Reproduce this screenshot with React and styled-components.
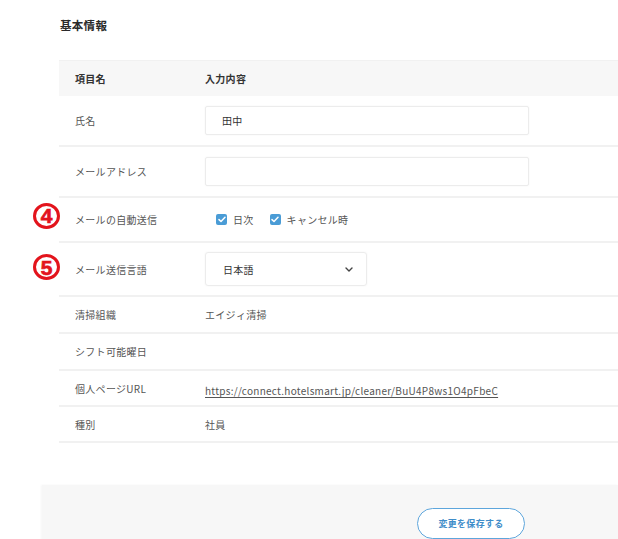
import React from "react";
import styled, { createGlobalStyle } from "styled-components";

const Global = createGlobalStyle`
  html, body { margin: 0; padding: 0; background: #fff; overflow: hidden; }
  body { font-family: "Noto Sans CJK JP", "Noto Sans", sans-serif; color: #444; }
  * { box-sizing: border-box; }
`;

const Page = styled.div`
  width: 618px;
  height: 539px;
  overflow: hidden;
`;

const Section = styled.section`
  padding: 17px 0 0 59px;
`;

const Title = styled.h2`
  margin: 0 0 0 1px;
  font-size: 11.5px;
  line-height: 17px;
  font-weight: 700;
  color: #2a2a2a;
  letter-spacing: 0.3px;
`;

const Table = styled.div`
  margin-top: 26px;
  display: flex;
  flex-direction: column;
`;

const Row = styled.div`
  position: relative;
  display: grid;
  grid-template-columns: 130px 1fr;
  align-items: center;
  height: ${(p) => p.$h}px;
  padding-left: 16px;
  background: ${(p) => (p.$head ? "#f7f7f7" : "#fff")};
  border-top: ${(p) => (p.$head ? "1px solid #f1f1f1" : "none")};
  border-bottom: ${(p) => (p.$head ? "none" : "2px solid #f1f1f1")};
`;

const HeadCell = styled.div`
  font-size: 10px;
  font-weight: 700;
  color: #333;
  letter-spacing: 0.3px;
`;

const Label = styled.div`
  font-size: 10px;
  color: #555;
  letter-spacing: 0.3px;
`;

const Value = styled.div`
  font-size: 10px;
  color: #555;
  letter-spacing: 0.3px;
`;

const Link = styled.a`
  font-size: 10px;
  color: #555;
  letter-spacing: 0.28px;
  text-decoration: underline;
  text-underline-offset: 2px;
`;

const TextInput = styled.div`
  width: 324px;
  height: 29px;
  border: 1px solid #ececec;
  border-radius: 2px;
  box-shadow: 0 0 2px rgba(0, 0, 0, 0.05);
  padding-left: 16px;
  display: flex;
  align-items: center;
  font-size: 10px;
  color: #333;
  letter-spacing: 0.3px;
`;

const Select = styled.div`
  width: 162px;
  height: 34px;
  border: 1px solid #ececec;
  border-radius: 3px;
  box-shadow: 0 0 2px rgba(0, 0, 0, 0.05);
  padding: 0 13px 0 17px;
  display: flex;
  align-items: center;
  justify-content: space-between;
  font-size: 10px;
  color: #333;
  letter-spacing: 0.3px;
`;

const Checks = styled.div`
  display: flex;
  align-items: center;
  gap: 16px;
  padding-left: 11px;
`;

const CheckItem = styled.label`
  display: flex;
  align-items: center;
  gap: 6px;
  font-size: 10px;
  color: #555;
  letter-spacing: 0.3px;
`;

const Box = styled.span`
  width: 11px;
  height: 11px;
  border-radius: 2px;
  background: #4a9cd6;
  display: inline-flex;
  align-items: center;
  justify-content: center;
`;

const Marker = styled.span`
  position: absolute;
  left: -26px;
  top: 50%;
  transform: translateY(calc(-50% + ${(p) => p.$dy || 0}px));
  width: 27px;
  height: 26px;
  border: 3px solid #e3141c;
  border-radius: 50%;
  display: flex;
  align-items: center;
  justify-content: center;
  font-family: "Liberation Sans", Arial, sans-serif;
  font-weight: 700;
  font-size: 21px;
  line-height: 1;
  color: #e3141c;
  -webkit-text-stroke: 0.7px #e3141c;
`;

const Footer = styled.footer`
  margin: 42px 0 0 42px;
  height: 80px;
  background: #f7f7f7;
  box-shadow: -1px 0 2px rgba(0, 0, 0, 0.04);
  padding: 23px 0 0 375px;
`;

const SaveButton = styled.button`
  width: 108px;
  height: 31px;
  border: 1px solid #5ea6dc;
  border-radius: 16px;
  background: #fff;
  color: #3f8dc9;
  font-family: "Noto Sans CJK JP", sans-serif;
  font-size: 9px;
  font-weight: 700;
  letter-spacing: 0.3px;
  padding: 0;
`;

const Check = () => (
  <Box>
    <svg width="8" height="7" viewBox="0 0 8 7">
      <polyline points="1,3.6 3,5.5 7,1.2" fill="none" stroke="#fff" strokeWidth="1.5" strokeLinecap="round" strokeLinejoin="round" />
    </svg>
  </Box>
);

const Chevron = () => (
  <svg width="8" height="5" viewBox="0 0 8 5">
    <polyline points="1,1 4,4 7,1" fill="none" stroke="#444" strokeWidth="1.4" strokeLinecap="round" strokeLinejoin="round" />
  </svg>
);

export default function App() {
  return (
    <Page>
      <Global />
      <Section>
        <Title>基本情報</Title>
        <Table>
          <Row $head $h={36}>
            <HeadCell>項目名</HeadCell>
            <HeadCell>入力内容</HeadCell>
          </Row>
          <Row $h={51}>
            <Label>氏名</Label>
            <TextInput>田中</TextInput>
          </Row>
          <Row $h={51}>
            <Label>メールアドレス</Label>
            <TextInput />
          </Row>
          <Row $h={45}>
            <Marker $dy={-4}>4</Marker>
            <Label>メールの自動送信</Label>
            <Checks>
              <CheckItem><Check />日次</CheckItem>
              <CheckItem><Check />キャンセル時</CheckItem>
            </Checks>
          </Row>
          <Row $h={54}>
            <Marker $dy={-2}>5</Marker>
            <Label>メール送信言語</Label>
            <Select>
              <span>日本語</span>
              <Chevron />
            </Select>
          </Row>
          <Row $h={37}>
            <Label>清掃組織</Label>
            <Value>エイジィ清掃</Value>
          </Row>
          <Row $h={37}>
            <Label>シフト可能曜日</Label>
            <Value />
          </Row>
          <Row $h={36}>
            <Label>個人ページURL</Label>
            <div>
              <Link href="#">https://connect.hotelsmart.jp/cleaner/BuU4P8ws1O4pFbeC</Link>
            </div>
          </Row>
          <Row $h={36}>
            <Label>種別</Label>
            <Value>社員</Value>
          </Row>
        </Table>
      </Section>
      <Footer>
        <SaveButton>変更を保存する</SaveButton>
      </Footer>
    </Page>
  );
}
